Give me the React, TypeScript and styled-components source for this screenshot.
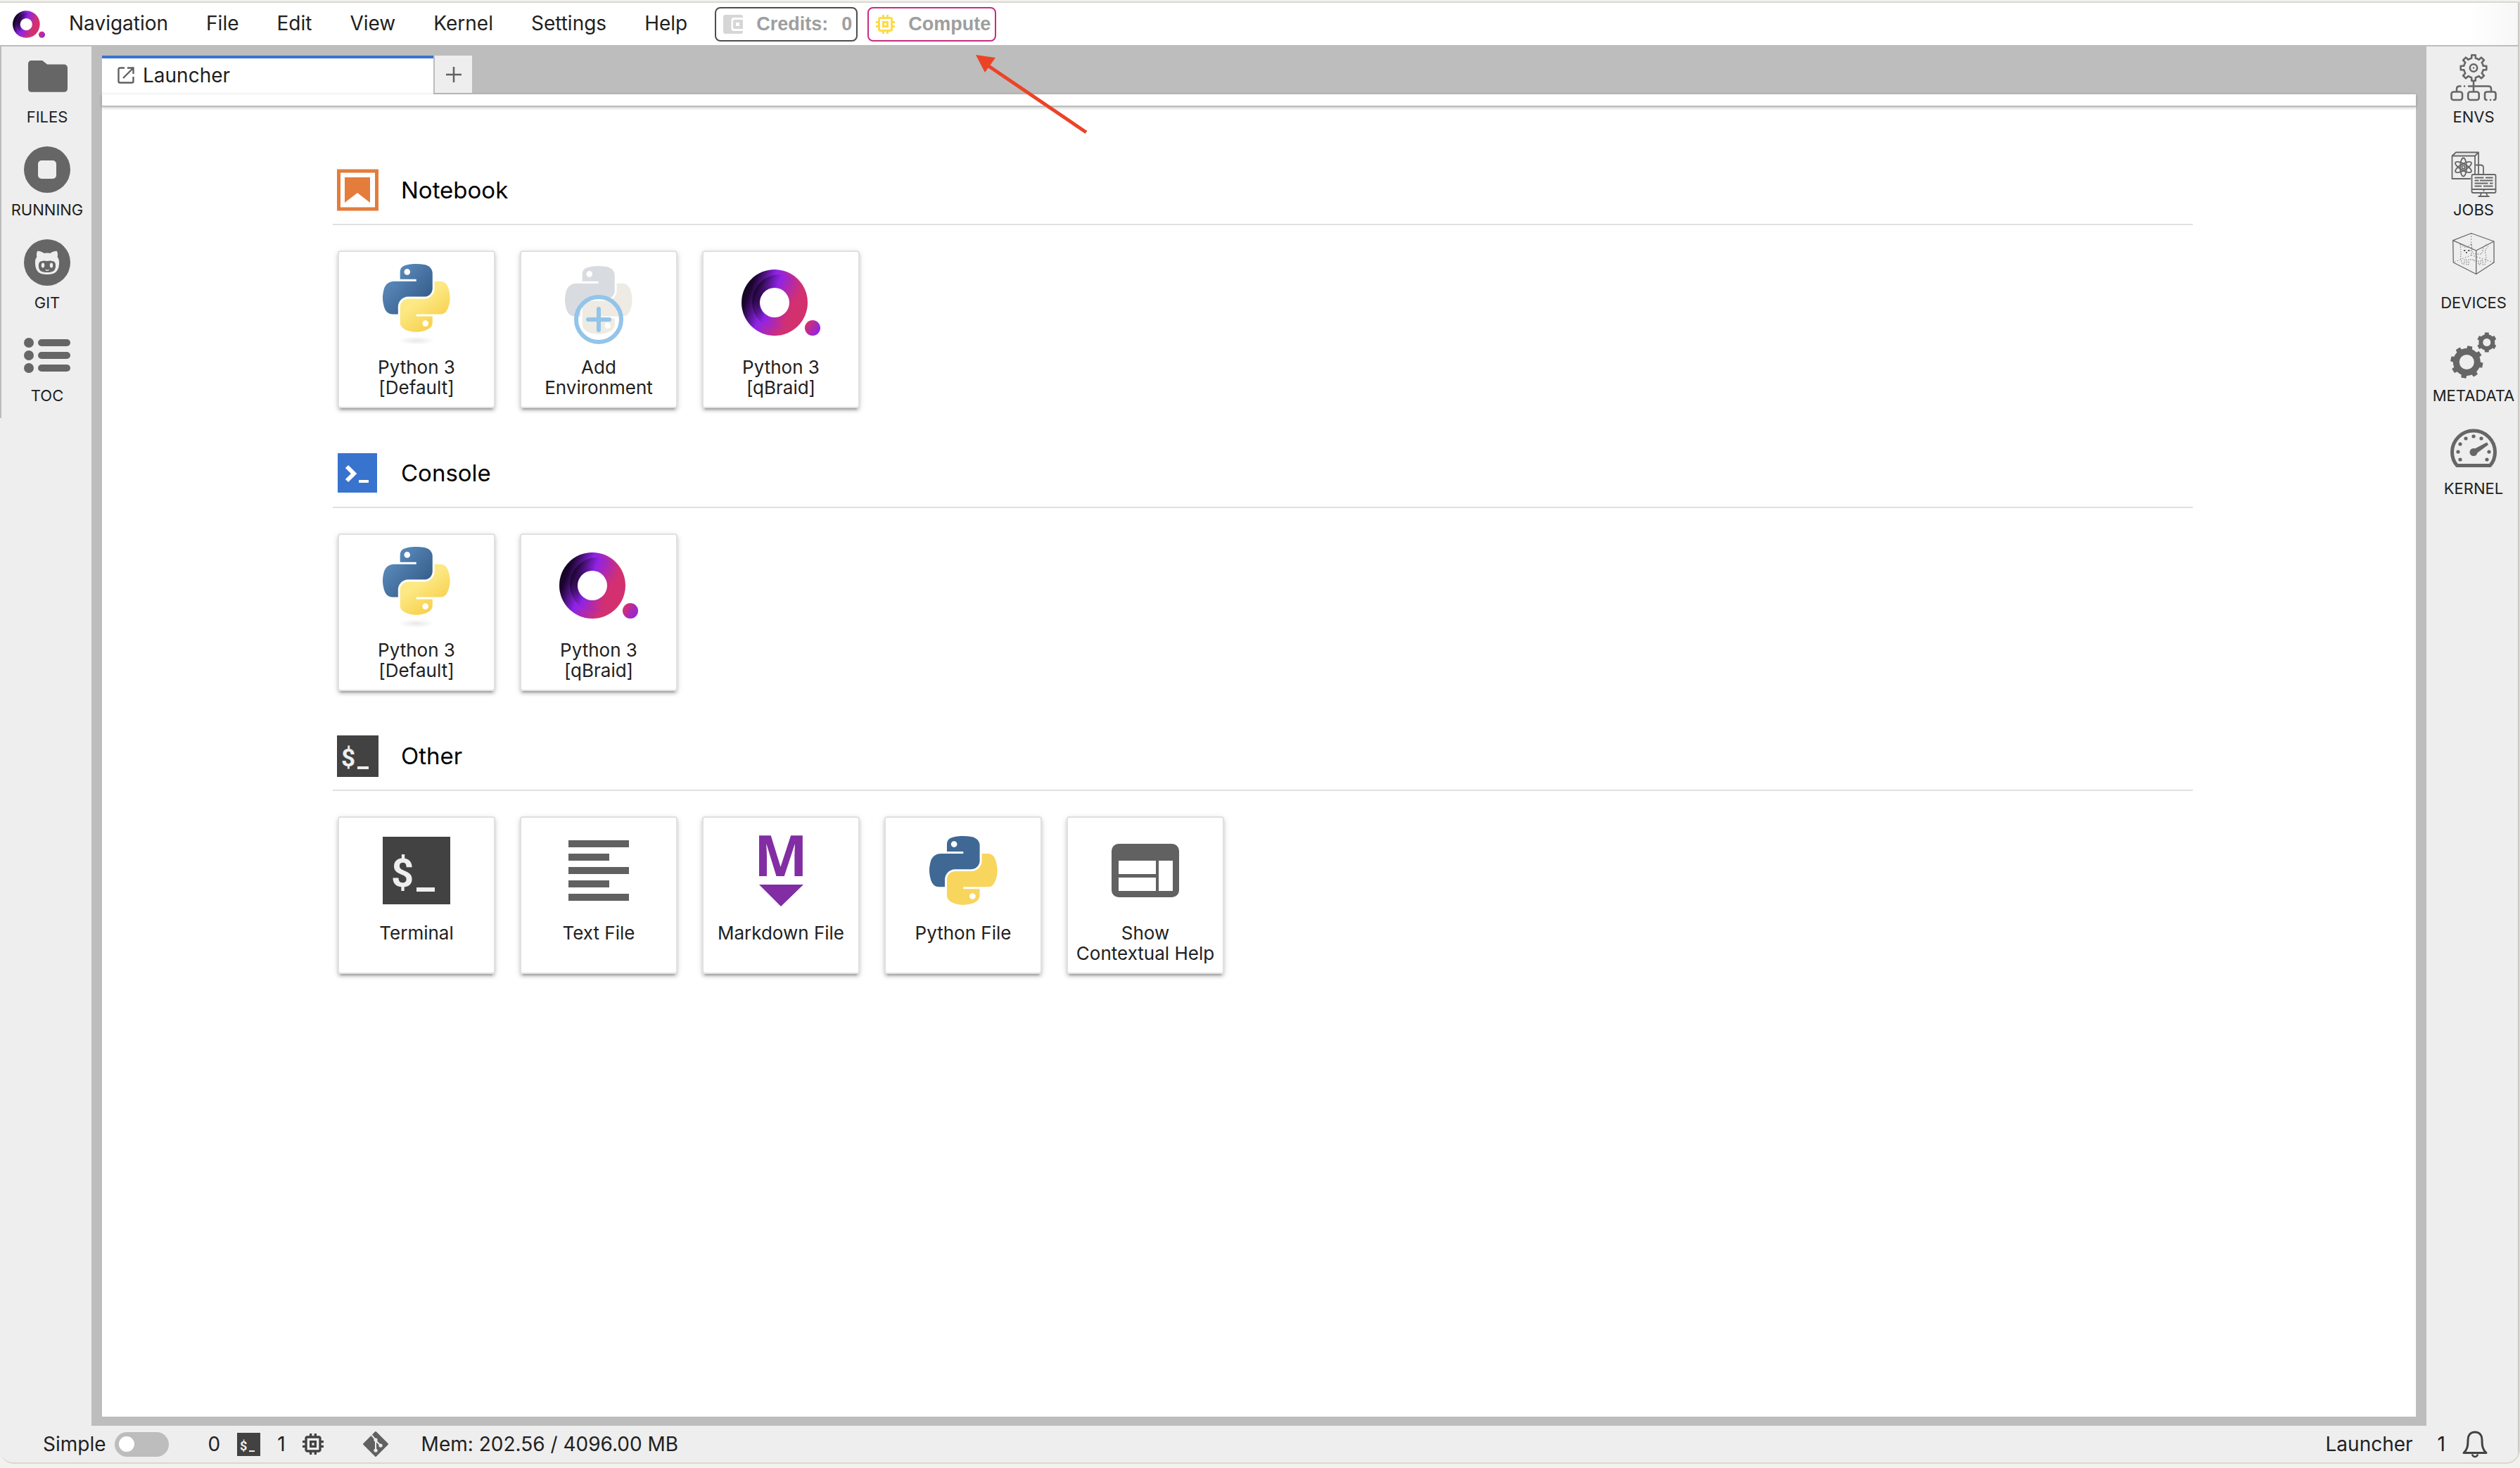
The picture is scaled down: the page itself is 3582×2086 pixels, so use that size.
import React, { useId } from 'react';
import styled, { createGlobalStyle } from 'styled-components';

const line = '#bdbdbd';
const chrome = '#eeeeee';
const ink = '#212121';
const icon = '#666666';
const edge = '#d9d8d0';
const ui = 'Inter, "Liberation Sans", sans-serif';

const GlobalStyle = createGlobalStyle`
  *, *::before, *::after { box-sizing: border-box; }
  html, body { margin: 0; padding: 0; background: #f2f1ee; }
  body { font-family: ${ui}; color: ${ink}; }
  button { font: inherit; color: inherit; margin: 0; padding: 0; border: 0; background: none; cursor: pointer; }
  svg { display: block; flex: none; overflow: visible; }
`;

/* ---------- shell ---------- */

const Page = styled.div`
  position: relative;
  display: flex;
  height: 100vh;
  padding: 2px 0 6px;
`;

const Frame = styled.div`
  flex: 1;
  min-width: 0;
  display: flex;
  border: solid ${edge};
  border-width: 2px 2px 2px 0;
  border-radius: 0 0 20px 20px;
  overflow: hidden;
`;

const Shell = styled.div`
  flex: 1;
  min-width: 0;
  display: flex;
  flex-direction: column;
  background: ${chrome};
  border-right: 1px solid ${line};
`;

const Header = styled.header`
  display: flex;
  align-items: center;
  height: 60px;
  padding-left: 18px;
  background: linear-gradient(to right, #ffffff 98%, #f7f7f7);
`;

const Menu = styled.nav`
  display: flex;
  padding: 0 12px 2px 7px;
`;

const MenuItem = styled.button`
  padding: 0 27px;
  font-size: 28px;
  line-height: 36px;
`;

const HeaderButtons = styled.div`
  display: flex;
  gap: 14px;
`;

const HeaderButton = styled.button<{ $tone: string }>`
  display: flex;
  align-items: center;
  gap: 19px;
  height: 49px;
  padding: 0 6px 0 10px;
  border: 2px solid ${p => p.$tone};
  border-radius: 8px;
  background: #ffffff;
  color: #9e9e9e;
  font: bold 27px/32px "Liberation Sans", Arial, sans-serif;
`;

const Body = styled.div`
  flex: 1;
  min-height: 0;
  display: flex;
`;

const Rail = styled.nav<{ $side: 'left' | 'right' }>`
  width: 130px;
  flex: none;
  border-top: 2px solid ${line};
  padding-left: ${p => (p.$side === 'right' ? '4px' : '0')};
`;

const RailTab = styled.button<{ $edged?: boolean }>`
  display: flex;
  flex-direction: column;
  align-items: center;
  width: 100%;
  height: 132px;
  padding-left: ${p => (p.$edged ? '2px' : '0')};
  border-left: ${p => (p.$edged ? `2px solid ${line}` : '0')};
  font-size: 22px;
  line-height: 24px;
`;

const Main = styled.main`
  flex: 1;
  min-width: 0;
  display: flex;
  flex-direction: column;
  padding: 15px 15px 13px;
  background: ${line};
`;

const TabStrip = styled.div`
  display: flex;
  height: 55px;
`;

const Tab = styled.button`
  display: flex;
  align-items: center;
  gap: 12px;
  width: 471px;
  padding: 0 22px 4px;
  border-top: 4px solid #3873d0;
  background: #ffffff;
  font-size: 28px;
  line-height: 36px;
`;

const AddTab = styled.button`
  display: flex;
  align-items: center;
  justify-content: center;
  width: 55px;
  border: solid ${line};
  border-width: 0 0 2px 2px;
  background: ${chrome};
`;

const TabToolbar = styled.div`
  height: 18px;
  background: #ffffff;
  border-bottom: 2px solid ${line};
  box-shadow: 0 1px 4px rgba(0, 0, 0, 0.25);
  z-index: 1;
`;

const Launcher = styled.div`
  flex: 1;
  min-height: 0;
  overflow: hidden;
  padding: 88px 317px 0 328px;
  background: #ffffff;
`;

const Section = styled.section`
  margin-bottom: 62px;
`;

const SectionHeader = styled.header`
  display: flex;
  align-items: center;
  gap: 31px;
  padding: 0 0 18px 6px;
  border-bottom: 2px solid #e0e0e0;
`;

const SectionTitle = styled.h2`
  margin: 0;
  color: #000000;
  font-size: 33px;
  line-height: 60px;
  font-weight: 400;
`;

const Cards = styled.div`
  display: flex;
  flex-wrap: wrap;
  gap: 35px;
  padding: 36px 0 0 7px;
`;

const Card = styled.button`
  display: flex;
  flex-direction: column;
  align-items: center;
  width: 224px;
  height: 224px;
  border: 2px solid #e0e0e0;
  border-radius: 4px;
  background: #ffffff;
  box-shadow: 0 6px 2px -4px rgba(0, 0, 0, 0.2), 0 4px 4px rgba(0, 0, 0, 0.14),
    0 2px 10px rgba(0, 0, 0, 0.12);
`;

const CardLabel = styled.span`
  margin-top: 13px;
  padding: 0 8px;
  font-size: 26px;
  line-height: 29px;
`;

const StatusBar = styled.footer`
  display: flex;
  align-items: center;
  justify-content: space-between;
  height: 52px;
  padding: 0 43px 0 61px;
  font-size: 28px;
  line-height: 36px;
`;

const StatusGroup = styled.div<{ $gap: number }>`
  display: flex;
  align-items: center;
  gap: ${p => p.$gap}px;
`;

const SwitchLabel = styled.label`
  display: flex;
  align-items: center;
  gap: 12px;
`;

const Switch = styled.input`
  appearance: none;
  display: flex;
  align-items: center;
  width: 77px;
  height: 35px;
  margin: 0;
  padding: 0 6px;
  border-radius: 18px;
  background: ${line};
  &::before {
    content: '';
    width: 22px;
    height: 22px;
    border-radius: 50%;
    background: #ffffff;
  }
`;

const StatusButton = styled.button`
  display: flex;
  align-items: center;
`;

const Pointer = styled.svg`
  position: absolute;
  z-index: 2;
  left: 1380px;
  top: 70px;
`;

/* ---------- drawings ---------- */

const PY_BLUE =
  'M54.92 0C50.34.02 45.96.41 42.11 1.09C30.76 3.1 28.7 7.29 28.7 15.03V25.25H55.51V28.66H18.64C10.85 28.66 4.02 33.34 1.89 42.25C-.57 52.46-.68 58.84 1.89 69.5C3.79 77.44 8.35 83.09 16.14 83.09H25.36V70.84C25.36 61.99 33.01 54.19 42.11 54.19H68.89C76.34 54.19 82.29 48.05 82.29 40.56V15.03C82.29 7.77 76.16 2.31 68.89 1.09C64.28.33 59.5-.02 54.92 0ZM40.42 8.22C43.19 8.22 45.45 10.52 45.45 13.34C45.45 16.16 43.19 18.44 40.42 18.44C37.64 18.44 35.39 16.16 35.39 13.34C35.39 10.52 37.64 8.22 40.42 8.22Z';
const PY_YELLOW =
  'M85.64 28.66V40.56C85.64 49.79 77.81 57.56 68.89 57.56H42.11C34.77 57.56 28.7 63.84 28.7 71.19V96.72C28.7 103.99 35.02 108.26 42.11 110.34C50.59 112.84 58.73 113.29 68.89 110.34C75.64 108.39 82.29 104.46 82.29 96.72V86.5H55.51V83.09H95.7C103.49 83.09 106.4 77.66 109.11 69.5C111.91 61.1 111.79 53.03 109.11 42.25C107.18 34.49 103.5 28.66 95.7 28.66ZM70.58 93.31C73.35 93.31 75.61 95.59 75.61 98.41C75.61 101.23 73.35 103.53 70.58 103.53C67.81 103.53 65.54 101.23 65.54 98.41C65.54 95.59 67.81 93.31 70.58 93.31Z';

function gear(cx: number, cy: number, outer: number, root: number, teeth: number, turn = 0) {
  const step = (Math.PI * 2) / teeth;
  const pt = (r: number, a: number) =>
    `${(cx + r * Math.sin(a)).toFixed(2)} ${(cy - r * Math.cos(a)).toFixed(2)}`;
  let d = '';
  for (let i = 0; i < teeth; i++) {
    const a = i * step + turn;
    d += `${i ? 'L' : 'M'}${pt(root, a - step * 0.26)}L${pt(outer, a - step * 0.19)}`;
    d += `L${pt(outer, a + step * 0.19)}L${pt(root, a + step * 0.26)}`;
    d += `A${root} ${root} 0 0 1 ${pt(root, a + step * 0.74)}`;
  }
  return d + 'Z';
}

const disc = (cx: number, cy: number, r: number) =>
  `M${cx - r} ${cy}a${r} ${r} 0 1 0 ${2 * r} 0a${r} ${r} 0 1 0 ${-2 * r} 0Z`;

function CardArt({ children }: { children: React.ReactNode }) {
  return (
    <svg width="120" height="136" viewBox="0 0 120 136" fill="none" aria-hidden="true">
      {children}
    </svg>
  );
}

function PythonArt() {
  const id = useId();
  return (
    <CardArt>
      <defs>
        <linearGradient id={`${id}b`} x1="0" y1="0" x2="0.8" y2="0.75">
          <stop offset="0" stopColor="#6496c8" />
          <stop offset="0.2" stopColor="#5c8dbf" />
          <stop offset="1" stopColor="#38608d" />
        </linearGradient>
        <linearGradient id={`${id}y`} x1="0.3" y1="0.2" x2="0.75" y2="0.85">
          <stop offset="0.25" stopColor="#fce984" />
          <stop offset="0.9" stopColor="#f8d354" />
        </linearGradient>
        <radialGradient id={`${id}s`}>
          <stop offset="0" stopColor="#e8e8e8" />
          <stop offset="1" stopColor="#ffffff" />
        </radialGradient>
      </defs>
      <ellipse cx="60" cy="126" rx="26" ry="6" fill={`url(#${id}s)`} />
      <g transform="translate(12 17) scale(0.86)">
        <path d={PY_BLUE} fill={`url(#${id}b)`} />
        <path d={PY_YELLOW} fill={`url(#${id}y)`} />
      </g>
    </CardArt>
  );
}

function AddEnvironmentArt() {
  return (
    <CardArt>
      <g transform="translate(12 20) scale(0.86)">
        <path d={PY_BLUE} fill="#d8dce1" />
        <path d={PY_YELLOW} fill="#edebe3" />
      </g>
      <g stroke="#93c4ea" strokeWidth="6" strokeLinecap="round">
        <circle cx="60" cy="96" r="32" />
        <path d="M45 96h30M60 81v30" />
      </g>
    </CardArt>
  );
}

function PythonFileArt() {
  return (
    <CardArt>
      <g transform="translate(12 26) scale(0.87)">
        <path d={PY_BLUE} fill="#3f6894" />
        <path d={PY_YELLOW} fill="#f8d55c" />
      </g>
    </CardArt>
  );
}

function QRing() {
  const id = useId();
  const stops = (
    <>
      <stop offset="0" stopColor="#12031f" />
      <stop offset="0.1" stopColor="#1c0530" />
      <stop offset="0.38" stopColor="#8e23e8" />
      <stop offset="0.78" stopColor="#d3306f" />
      <stop offset="1" stopColor="#d3306f" />
    </>
  );
  return (
    <>
      <defs>
        <linearGradient id={`${id}a`} gradientUnits="userSpaceOnUse" x1="6" y1="55" x2="92" y2="88">
          {stops}
        </linearGradient>
        <linearGradient id={`${id}b`} gradientUnits="userSpaceOnUse" x1="18" y1="52" x2="98" y2="84">
          {stops}
        </linearGradient>
        <linearGradient id={`${id}c`} gradientUnits="userSpaceOnUse" x1="24" y1="50" x2="92" y2="78">
          {stops}
        </linearGradient>
        <linearGradient id={`${id}d`} x1="0" y1="0.2" x2="1" y2="0.8">
          <stop offset="0.1" stopColor="#d3306f" />
          <stop offset="0.95" stopColor="#8e23e8" />
        </linearGradient>
        <mask id={`${id}m`}>
          <rect width="120" height="136" fill="#ffffff" />
          <circle cx="51" cy="72" r="21" fill="#000000" />
        </mask>
      </defs>
      <g mask={`url(#${id}m)`}>
        <circle cx="51" cy="72" r="47" fill={`url(#${id}a)`} />
        <ellipse cx="54" cy="74" rx="42" ry="43" fill={`url(#${id}a)`} opacity="0.6" />
        <circle cx="58" cy="71" r="39" fill={`url(#${id}b)`} opacity="0.85" />
        <circle cx="57" cy="76" r="34" fill={`url(#${id}b)`} opacity="0.5" />
        <circle cx="54" cy="75" r="28" fill={`url(#${id}c)`} opacity="0.9" />
      </g>
      <circle cx="105" cy="108" r="11" fill={`url(#${id}d)`} />
    </>
  );
}

function QBraidArt() {
  return (
    <CardArt>
      <QRing />
    </CardArt>
  );
}

function Logo() {
  return (
    <svg width="46" height="39" viewBox="4 25 112 94" role="img" aria-label="qBraid">
      <QRing />
    </svg>
  );
}

const Prompt = styled.text`
  font-family: Roboto, "Liberation Sans", sans-serif;
  font-weight: 700;
  fill: ${chrome};
`;

function TerminalArt() {
  return (
    <CardArt>
      <rect x="12" y="27" width="96" height="96" fill="#424242" />
      <Prompt x="24" y="98" fontSize="56">$</Prompt>
      <rect x="60" y="99" width="26" height="6" fill={chrome} />
    </CardArt>
  );
}

function TextFileArt() {
  return (
    <CardArt>
      <path d="M17 32h86v10h-86zM17 51h58v10h-58zM17 70h86v10h-86zM17 89h58v10h-58zM17 108h86v10h-86z" fill="#616161" />
    </CardArt>
  );
}

const MarkdownLetter = styled.text`
  font-family: "Open Sans", "Liberation Sans", sans-serif;
  font-size: 81px;
  font-weight: 700;
  fill: #822da3;
`;

function MarkdownArt() {
  return (
    <CardArt>
      <MarkdownLetter x="60" y="83" textAnchor="middle">M</MarkdownLetter>
      <path d="M29 95h63L60 126z" fill="#822da3" />
    </CardArt>
  );
}

function HelpArt() {
  return (
    <CardArt>
      <path
        fillRule="evenodd"
        fill="#616161"
        d="M22 37h76a10 10 0 0 1 10 10v56a10 10 0 0 1-10 10h-76a10 10 0 0 1-10-10v-56a10 10 0 0 1 10-10zM22 61v19h53v-19zM22 85v19h53v-19zM79 61v43h20v-43z"
      />
    </CardArt>
  );
}

function SectionArt({ children }: { children: React.ReactNode }) {
  return (
    <svg width="60" height="60" viewBox="0 0 60 60" fill="none" aria-hidden="true">
      {children}
    </svg>
  );
}

function NotebookMark() {
  return (
    <SectionArt>
      <rect x="2.5" y="3" width="54" height="54" stroke="#e47c3c" strokeWidth="5" />
      <path d="M11 12h36v36L29 34 11 48z" fill="#e47c3c" />
    </SectionArt>
  );
}

function ConsoleMark() {
  return (
    <SectionArt>
      <rect x="1" y="2" width="56" height="56" fill="#3873cd" />
      <path d="M14 21l10 10-10 10" stroke="#ffffff" strokeWidth="6" />
      <rect x="31" y="40" width="14" height="4" fill="#ffffff" />
    </SectionArt>
  );
}

function OtherMark() {
  return (
    <SectionArt>
      <rect x="0" y="1" width="59" height="59" fill="#424242" />
      <Prompt x="6" y="45" fontSize="35">$</Prompt>
      <rect x="29" y="45" width="16" height="4" fill={chrome} />
    </SectionArt>
  );
}

function RailArt({ children }: { children: React.ReactNode }) {
  return (
    <svg width="66" height="88" viewBox="0 0 66 88" fill="none" aria-hidden="true">
      {children}
    </svg>
  );
}

function FilesArt() {
  return (
    <RailArt>
      <path
        transform="translate(0.4 8.8) scale(2.8)"
        fill={icon}
        d="M9.2 4H3.6C2.6 4 2 4.8 2 5.7v12.6C2 19.3 2.7 20 3.6 20h16.7c1 0 1.7-.7 1.7-1.7V7.8c0-1-.8-1.8-1.7-1.8h-8.6z"
      />
    </RailArt>
  );
}

function RunningArt() {
  return (
    <RailArt>
      <circle cx="33" cy="43" r="33" fill={icon} />
      <rect x="20" y="30" width="26" height="26" rx="5" fill={chrome} />
    </RailArt>
  );
}

function GitArt() {
  return (
    <RailArt>
      <circle cx="33" cy="43" r="33" fill={icon} />
      <path
        fill={chrome}
        d="M19 27c2-1 7 1 10 3c2.500-.6 5.500-.6 8 0c3-2 8-4 10-3c1.300 3 1.200 6 .6 8c2 2.500 2.800 5.500 2.400 10c-.7 11-6 15-17 15s-16.300-4-17-15c-.4-4.500.4-7.500 2.400-10c-.6-2-.7-5 .6-8z"
      />
      <path
        fill={icon}
        d="M26 41c3-1 5 0 7 0s4-1 7 0c4 0 5.500 3 5 8c-.6 6-4 8-12 8s-11.400-2-12-8c-.5-5 1-8 5-8z"
      />
      <ellipse cx="27" cy="47" rx="2.200" ry="3.600" fill={chrome} />
      <ellipse cx="39" cy="47" rx="2.200" ry="3.600" fill={chrome} />
      <path d="M31 53.500q2 1.800 4 0" stroke={chrome} strokeWidth="1.200" strokeLinecap="round" />
    </RailArt>
  );
}

function TocArt() {
  return (
    <RailArt>
      {[25, 43, 61].map(y => (
        <g key={y}>
          <circle cx="7" cy={y} r="7" fill={icon} />
          <rect x="20" y={y - 5} width="46" height="10" rx="5" fill={icon} />
        </g>
      ))}
    </RailArt>
  );
}

function EnvsArt() {
  return (
    <RailArt>
      <g stroke={icon} strokeWidth="2.600" strokeLinejoin="round" strokeLinecap="round">
        <path d={gear(33, 30.5, 18.5, 14, 8)} />
        <circle cx="33" cy="30.500" r="5.200" />
        <path d="M33 50v13M26 56.500h28q4 0 4 4v2.500M9 63v-2.500q0-4 4-4h1.500M20 56.500h.1" />
        <rect x="1.500" y="64.500" width="15.500" height="11.500" rx="3" />
        <rect x="25.200" y="64.500" width="15.500" height="11.500" rx="3" />
        <path d="M51.500 76q-2.500 0-2.500-3v-5.500q0-3 3-3h9.500q3 0 3 3v5.500q0 3-2.500 3M57 76h.1" />
      </g>
      <circle cx="33" cy="30.500" r="1.200" fill={icon} />
    </RailArt>
  );
}

function JobsArt() {
  return (
    <RailArt>
      <g stroke={icon} strokeWidth="1.800" strokeLinejoin="round">
        <path d="M29 56h-26.500v-32.500h32.500v26M2.500 23.500l5.500-5h32l-5 5M40 18.500v31" />
        <path d="M36 36.500h7q4 0 4 4v9" />
        <ellipse cx="18.500" cy="39.500" rx="4.500" ry="13" />
        <ellipse cx="18.500" cy="39.500" rx="4.500" ry="13" transform="rotate(60 18.500 39.500)" />
        <ellipse cx="18.500" cy="39.500" rx="4.500" ry="13" transform="rotate(120 18.500 39.500)" />
        <circle cx="18.500" cy="39.500" r="2.200" />
        <rect x="30.500" y="50" width="34" height="26" rx="2" fill={chrome} />
        <path d="M30.500 71h34M44 76l-1.500 4.500M51 76l1.500 4.500M39.500 81h16M47.500 71v3" />
        <path d="M34.500 54.500h13M50 54.500h10.500M34.500 58.500h6M42 58.500h18.500M34.500 62.500h19M56 62.500h4.500M34.500 66.500h10M47 66.500h13.500" />
      </g>
    </RailArt>
  );
}

function DevicesArt() {
  return (
    <RailArt>
      <path
        d="M29.700 1.500L3.700 11.600l.6 31.400l32.400 16.500L62 43V13zM3.700 11.600L36.700 26 62 13M36.700 26v33.500"
        stroke={icon}
        strokeWidth="1.300"
        strokeLinejoin="round"
      />
      <path
        d="M29.700 1.500v31M29.700 32.500L4.300 43M29.700 32.500L62 43"
        stroke={icon}
        strokeWidth="0.900"
        strokeDasharray="1.500 2.500"
      />
      <path
        d="M14 17q1 7 1 13q-1 8 2 15h3v-6h3v7h3v-7h8v2h6v5h3v-6h3v6h3q3-8 1-15q-2-6 4-11q1-3-2-3q-6 3-6 10l-2 4h-10q-3-1-3-6l-1-9l-5 5h-5z"
        stroke={icon}
        strokeWidth="1"
        strokeDasharray="1.500 1.800"
      />
      <path d="M19 26h2.500M25 26h2.500M22 29h2" stroke={icon} strokeWidth="1.800" />
    </RailArt>
  );
}

function MetadataArt() {
  return (
    <RailArt>
      <path fillRule="evenodd" fill={icon} d={gear(23.3, 52.5, 23.3, 19.5, 8, 0.2) + disc(23.3, 52.5, 10.5)} />
      <path fillRule="evenodd" fill={icon} d={gear(51.8, 24.5, 14.2, 11.5, 6) + disc(51.8, 24.5, 5.5)} />
    </RailArt>
  );
}

function KernelArt() {
  const ticks = [[33, 26], [22, 29], [44, 29], [14, 37], [11, 48], [55, 48], [14, 59], [52, 59]];
  return (
    <RailArt>
      <path d="M9.500 67.500C5 62.500 2.500 55 2.500 48.500a30.500 30.500 0 0 1 61 0C63.500 55 61 62.500 56.500 67.500z" stroke={icon} strokeWidth="5" strokeLinejoin="round" />
      {ticks.map(([x, y]) => (
        <circle key={`${x}-${y}`} cx={x} cy={y} r="2.600" fill={icon} />
      ))}
      <circle cx="33" cy="48.500" r="5.500" fill={icon} />
      <path d="M32 45L52 34.500l2 3.500L35 52z" fill={icon} />
    </RailArt>
  );
}

function Chip({ size, color }: { size: number; color: string }) {
  return (
    <svg width={size} height={size} viewBox="3 3 18 18" fill={color} aria-hidden="true">
      <path d="M15 9H9v6h6V9zm-2 4h-2v-2h2v2zm8-2V9h-2V7c0-1.100-.9-2-2-2h-2V3h-2v2h-2V3H9v2H7c-1.100 0-2 .9-2 2v2H3v2h2v2H3v2h2v2c0 1.100.9 2 2 2h2v2h2v-2h2v2h2v-2h2c1.100 0 2-.9 2-2v-2h2v-2h-2v-2h2zm-4 6H7V7h10v10z" />
    </svg>
  );
}

function Wallet() {
  return (
    <svg width="28" height="27" viewBox="0 0 28 27" aria-hidden="true">
      <path
        d="M3 0h22q3 0 3 3v1H15q-3.500 0-3.500 3.500v12q0 3.500 3.500 3.500h13v1q0 3-3 3H3q-3 0-3-3V3q0-3 3-3z"
        fill="#d6d6d6"
      />
      <path fillRule="evenodd" d="M16 7h12v13H16q-2 0-2-2V9q0-2 2-2zM18 11v5h5v-5z" fill="#d6d6d6" />
    </svg>
  );
}

function TerminalMark() {
  return (
    <svg width="33" height="34" viewBox="0 -1 33 34" aria-hidden="true">
      <rect width="33" height="33" fill="#424242" />
      <Prompt x="4" y="25" fontSize="18">$</Prompt>
      <rect x="17" y="25" width="8" height="2" fill={chrome} />
    </svg>
  );
}

function GitMark() {
  return (
    <svg width="36" height="36" viewBox="0 0 36 36" aria-hidden="true">
      <path d="M18 1L35 18 18 35 1 18z" fill="#616161" stroke="#616161" strokeWidth="2" strokeLinejoin="round" />
      <path d="M12 5l6 7v15M18 13l7 7" stroke={chrome} strokeWidth="2" fill="none" />
      <circle cx="18" cy="12" r="2.600" fill={chrome} />
      <circle cx="18" cy="27" r="2.600" fill={chrome} />
      <circle cx="25" cy="20" r="2.600" fill={chrome} />
    </svg>
  );
}

function Bell() {
  return (
    <svg width="36" height="39" viewBox="0 0 36 39" fill="none" aria-hidden="true">
      <path
        d="M18 2C11 2 8 7 8 13c0 9-1 14-6 18.500h32C29 27 28 22 28 13 28 7 25 2 18 2z"
        stroke="#424242"
        strokeWidth="3"
        strokeLinejoin="round"
      />
      <path d="M14 33.500q1 3.500 4 3.500t4-3.500" stroke="#424242" strokeWidth="2.500" />
    </svg>
  );
}

function LaunchMark() {
  return (
    <svg width="24" height="24" viewBox="0 0 24 24" fill="none" stroke="#616161" strokeWidth="2.400" aria-hidden="true">
      <path d="M10 1.500H3.500q-2 0-2 2v17q0 2 2 2h17q2 0 2-2V14" />
      <path d="M14 1.500h8.500V10M22 2L8 16" />
    </svg>
  );
}

/* ---------- data ---------- */

const menus = ['Navigation', 'File', 'Edit', 'View', 'Kernel', 'Settings', 'Help'];

const leftTabs = [
  { label: 'FILES', Art: FilesArt },
  { label: 'RUNNING', Art: RunningArt },
  { label: 'GIT', Art: GitArt },
  { label: 'TOC', Art: TocArt },
];

const rightTabs = [
  { label: 'ENVS', Art: EnvsArt },
  { label: 'JOBS', Art: JobsArt },
  { label: 'DEVICES', Art: DevicesArt },
  { label: 'METADATA', Art: MetadataArt },
  { label: 'KERNEL', Art: KernelArt },
];

const sections = [
  {
    title: 'Notebook',
    Mark: NotebookMark,
    cards: [
      { label: 'Python 3 [Default]', Art: PythonArt },
      { label: 'Add Environment', Art: AddEnvironmentArt },
      { label: 'Python 3 [qBraid]', Art: QBraidArt },
    ],
  },
  {
    title: 'Console',
    Mark: ConsoleMark,
    cards: [
      { label: 'Python 3 [Default]', Art: PythonArt },
      { label: 'Python 3 [qBraid]', Art: QBraidArt },
    ],
  },
  {
    title: 'Other',
    Mark: OtherMark,
    cards: [
      { label: 'Terminal', Art: TerminalArt },
      { label: 'Text File', Art: TextFileArt },
      { label: 'Markdown File', Art: MarkdownArt },
      { label: 'Python File', Art: PythonFileArt },
      { label: 'Show Contextual Help', Art: HelpArt },
    ],
  },
];

export default function App() {
  return (
    <>
      <GlobalStyle />
      <Page>
        <Frame>
          <Shell>
            <Header>
              <Logo />
              <Menu>
                {menus.map(m => (
                  <MenuItem key={m}>{m}</MenuItem>
                ))}
              </Menu>
              <HeaderButtons>
                <HeaderButton $tone="#4d4d4d">
                  <Wallet />
                  <span>Credits:</span>
                  <span>0</span>
                </HeaderButton>
                <HeaderButton $tone="#c72c81">
                  <Chip size={27} color="#fbdb4a" />
                  <span>Compute</span>
                </HeaderButton>
              </HeaderButtons>
            </Header>
            <Body>
              <Rail $side="left" aria-label="Left sidebar">
                {leftTabs.map(({ label, Art }) => (
                  <RailTab key={label} $edged>
                    <Art />
                    {label}
                  </RailTab>
                ))}
              </Rail>
              <Main>
                <TabStrip>
                  <Tab>
                    <LaunchMark />
                    Launcher
                  </Tab>
                  <AddTab aria-label="New launcher">
                    <svg width="22" height="22" viewBox="0 0 22 22" stroke="#616161" strokeWidth="2.500">
                      <path d="M0 11h22M11 0v22" />
                    </svg>
                  </AddTab>
                </TabStrip>
                <TabToolbar />
                <Launcher>
                  {sections.map(({ title, Mark, cards }) => (
                    <Section key={title}>
                      <SectionHeader>
                        <Mark />
                        <SectionTitle>{title}</SectionTitle>
                      </SectionHeader>
                      <Cards>
                        {cards.map(({ label, Art }) => (
                          <Card key={label}>
                            <Art />
                            <CardLabel>{label}</CardLabel>
                          </Card>
                        ))}
                      </Cards>
                    </Section>
                  ))}
                </Launcher>
              </Main>
              <Rail $side="right" aria-label="Right sidebar">
                {rightTabs.map(({ label, Art }) => (
                  <RailTab key={label}>
                    <Art />
                    {label}
                  </RailTab>
                ))}
              </Rail>
            </Body>
            <StatusBar>
              <StatusGroup $gap={56}>
                <SwitchLabel>
                  Simple
                  <Switch type="checkbox" role="switch" />
                </SwitchLabel>
                <StatusGroup $gap={24}>
                  <span>0</span>
                  <TerminalMark />
                  <span>1</span>
                  <Chip size={30} color="#424242" />
                </StatusGroup>
                <StatusGroup $gap={47}>
                  <StatusButton aria-label="Git">
                    <GitMark />
                  </StatusButton>
                  <span>Mem: 202.56 / 4096.00 MB</span>
                </StatusGroup>
              </StatusGroup>
              <StatusGroup $gap={35}>
                <span>Launcher</span>
                <StatusGroup $gap={24}>
                  <span>1</span>
                  <StatusButton aria-label="Notifications">
                    <Bell />
                  </StatusButton>
                </StatusGroup>
              </StatusGroup>
            </StatusBar>
          </Shell>
        </Frame>
        <Pointer width="172" height="124" viewBox="0 0 172 124" aria-hidden="true">
          <path d="M24 23L164 118" stroke="#ec4327" strokeWidth="5" />
          <path d="M7 8L35 12 20 33z" fill="#ec4327" />
        </Pointer>
      </Page>
    </>
  );
}
